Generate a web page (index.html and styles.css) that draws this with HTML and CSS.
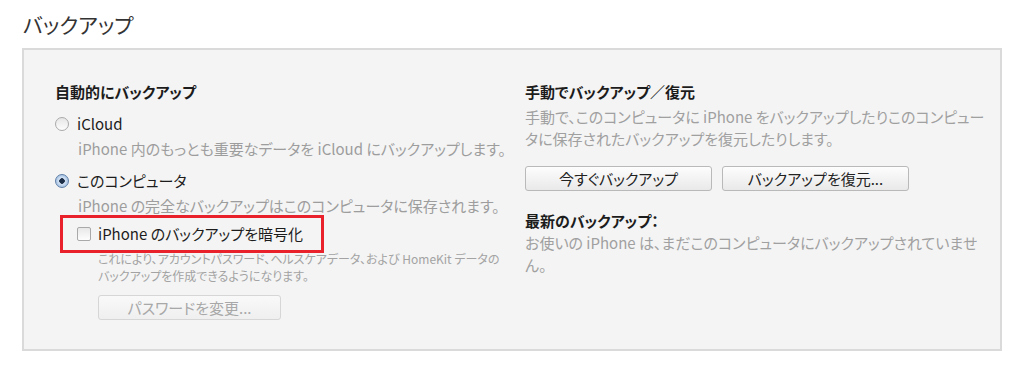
FILE: index.html
```html
<!doctype html>
<html lang="ja">
<head>
<meta charset="UTF-8">
<title>バックアップ</title>
<link rel="stylesheet" href="styles.css">
</head>
<body>
	<div class="wrapper">
		<h1 class="title">バックアップ</h1>

		<div class="panel">
			<div class="col left">
				<h2 class="head">自動的にバックアップ</h2>

				<div class="option">
					<span class="radio"></span>
					<span class="label">iCloud</span>
				</div>
				<p class="desc">iPhone 内のもっとも重要なデータを iCloud にバックアップします。</p>

				<div class="option">
					<span class="radio on"></span>
					<span class="label">このコンピュータ</span>
				</div>
				<p class="desc">iPhone の完全なバックアップはこのコンピュータに保存されます。</p>

				<div class="mark">
					<span class="check"></span>
					<span class="label">iPhone のバックアップを暗号化</span>
				</div>
				<p class="note">これにより、アカウントパスワード、ヘルスケアデータ、および HomeKit データのバックアップを作成できるようになります。</p>

				<button class="btn off" id="bt_password" disabled>パスワードを変更...</button>
			</div>

			<div class="col right">
				<h2 class="head">手動でバックアップ／復元</h2>
				<p class="desc2">手動で、このコンピュータに iPhone をバックアップしたりこのコンピュータに保存されたバックアップを復元したりします。</p>

				<div class="btns">
					<button class="btn" id="bt_now">今すぐバックアップ</button>
					<button class="btn" id="bt_restore">バックアップを復元...</button>
				</div>

				<h2 class="head latest">最新のバックアップ：</h2>
				<p class="desc2">お使いの iPhone は、まだこのコンピュータにバックアップされていません。</p>
			</div>
		</div>
	</div>
</body>
</html>
```

FILE: styles.css
```css
body{
	margin:0;
	background:#fff;
	font-family:"Noto Sans CJK JP","Noto Sans",sans-serif;
	font-feature-settings:"palt";
	color:#222;
}
.wrapper{
	padding:0 0 0 22px;
}
.title{
	margin:0;
	padding:9px 0 0 1px;
	height:48px;
	box-sizing:border-box;
	font-size:21px;
	line-height:30px;
	font-weight:normal;
	color:#333;
}
.panel{
	width:980px;
	height:303px;
	box-sizing:border-box;
	border:2px solid #dadada;
	background:#f4f4f4;
	display:flex;
	padding:31px 0 0 31px;
}
.col{
	display:flex;
	flex-direction:column;
	align-items:flex-start;
}
.left{
	width:470px;
}
.right{
	width:460px;
}
.head{
	margin:0;
	font-size:15px;
	line-height:22px;
	font-weight:bold;
	color:#1c1c1c;
}
.option{
	display:flex;
	align-items:center;
	height:22px;
	margin-top:10px;
}
.label{
	font-size:15px;
	line-height:22px;
	color:#1c1c1c;
}
.radio{
	width:12px;
	height:12px;
	border:1px solid #a9a9a9;
	border-radius:50%;
	background:linear-gradient(#e6e6e6,#fdfdfd);
	margin-right:8px;
}
.radio.on{
	border-color:#5f7fa6;
	background:radial-gradient(circle,#1d2f48 0 2.5px,#d5e4f5 3px,#a9c4e4 6px);
}
.desc{
	margin:3px 0 0 23px;
	font-size:15px;
	line-height:22px;
	color:#9d9d9d;
	white-space:nowrap;
}
.mark{
	display:flex;
	align-items:center;
	width:264px;
	height:38px;
	box-sizing:border-box;
	border:3px solid #e8212b;
	margin:-2px 0 -4px 5px;
	padding:0 0 0 14px;
}
.check{
	width:12px;
	height:12px;
	border:1px solid #a9a9a9;
	border-radius:2px;
	background:linear-gradient(#e8e8e8,#fdfdfd);
	margin-right:7px;
}
.note{
	margin:1px 0 0 43px;
	font-size:12px;
	line-height:17px;
	color:#a3a3a3;
	width:410px;
}
.btn{
	height:25px;
	box-sizing:border-box;
	border:1px solid #b9b9b9;
	border-radius:3px;
	background:linear-gradient(#fdfdfd,#e9e9e9);
	font-family:inherit;
	font-feature-settings:"palt";
	font-size:15px;
	line-height:21px;
	color:#222;
	padding:0;
}
.btn.off{
	margin:11px 0 0 43px;
	width:183px;
	border-color:#d6d6d6;
	background:linear-gradient(#f9f9f9,#efefef);
	color:#a8a8a8;
}
.desc2{
	margin:3px 0 0 0;
	font-size:15px;
	line-height:22px;
	color:#a0a0a0;
}
.btns{
	display:flex;
	gap:10px;
	margin-top:16px;
}
.btns .btn{
	width:187px;
}
.latest{
	margin-top:19px;
}
.latest + .desc2{
	margin-top:0;
}
```
